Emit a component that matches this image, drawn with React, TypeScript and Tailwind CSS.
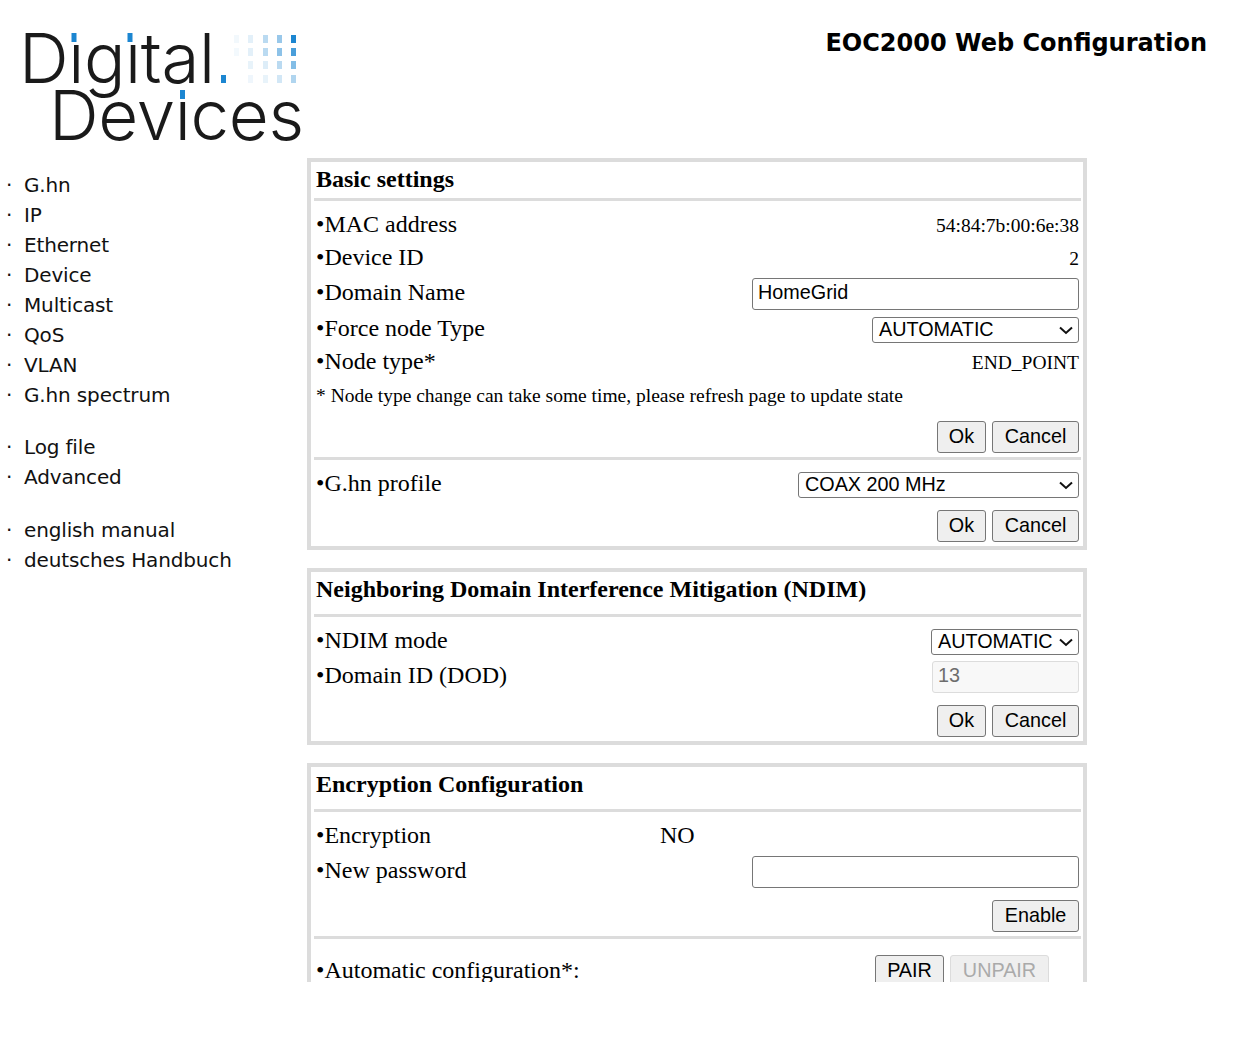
const menu = [
  ["G.hn", "IP", "Ethernet", "Device", "Multicast", "QoS", "VLAN", "G.hn spectrum"],
  ["Log file", "Advanced"],
  ["english manual", "deutsches Handbuch"],
];

function Logo() {
  const cols = [
    { x: 234, o: [0.06, 0.05, 0, 0] },
    { x: 248, o: [0.12, 0.12, 0.1, 0.07] },
    { x: 263, o: [0.3, 0.3, 0.15, 0.1] },
    { x: 277, o: [0.45, 0.5, 0.3, 0.2] },
    { x: 291, o: [1, 0.8, 0.55, 0.35] },
  ];
  const rows = [35, 48, 61, 75];
  return (
    <svg width="307" height="158" viewBox="0 0 307 158" className="blur-[0.4px]">
      <text x="19" y="83" fontFamily="Inter" fontWeight="350" fontSize="69" fill="#1a1a1a" textLength="196" lengthAdjust="spacing">
        Digital
      </text>
      <text x="49" y="140" fontFamily="Inter" fontWeight="350" fontSize="69" fill="#1a1a1a" textLength="255" lengthAdjust="spacing">
        Devices
      </text>
      <rect x="70" y="30" width="11" height="14" fill="#fff" />
      <rect x="126" y="30" width="11" height="14" fill="#fff" />
      <rect x="177" y="86" width="11" height="14" fill="#fff" />
      <rect x="71.500" y="33" width="5" height="9" fill="#1c86d1" />
      <rect x="127.500" y="33" width="5" height="9" fill="#1c86d1" />
      <rect x="180" y="90" width="5" height="9" fill="#1c86d1" />
      <rect x="221" y="75" width="5" height="8" fill="#1c86d1" />
      {cols.map((c) =>
        rows.map((y, i) => (
          <rect key={c.x + "-" + y} x={c.x} y={y} width="5" height="8" fill="#1c86d1" opacity={c.o[i]} />
        )),
      )}
    </svg>
  );
}

function Sidebar() {
  return (
    <nav className="w-[307px] shrink-0 pt-3 font-['DejaVu_Sans',sans-serif] text-[20px] tracking-[-0.15px] text-[#111] flex flex-col">
      {menu.map((group, i) => (
        <ul key={group[0]} className={i === 1 ? "mt-[22px]" : i === 2 ? "mt-[23px]" : ""}>
          {group.map((item) => (
            <li key={item} className="h-[30px] flex items-center pl-[6px]">
              <span className="w-[18px]">·</span>
              <span>{item}</span>
            </li>
          ))}
        </ul>
      ))}
    </nav>
  );
}

const btnWidth: Record<string, string> = {
  Ok: "w-[49px]",
  Cancel: "w-[87px]",
  Enable: "w-[87px]",
  PAIR: "w-[69px]",
  UNPAIR: "w-[99px]",
};

function Buttons({ labels, disabled }: { labels: string[]; disabled?: string }) {
  return (
    <div className="flex justify-end gap-[6px]">
      {labels.map((l) => (
        <button
          key={l}
          disabled={l === disabled}
          className={
            btnWidth[l] +
            " h-[32px] pb-[4px] rounded-[3px] bg-[#efefef] text-[19.8px] font-['Liberation_Sans',sans-serif] border " +
            (l === disabled ? "border-[#dcdcdc] text-[#aaa]" : "border-[#767676] text-black")
          }
        >
          {l}
        </button>
      ))}
    </div>
  );
}

function Row({ label, h, children }: { label: string; h: string; children?: React.ReactNode }) {
  return (
    <div className={"flex items-center justify-between " + h}>
      <span className="text-[24px] whitespace-nowrap pb-[4px]">•{label}</span>
      {children}
    </div>
  );
}

function Select({ value, w }: { value: string; w: string }) {
  return (
    <div className={"relative h-[26px] border border-[#767676] rounded-[3px] bg-white pl-[6px] flex items-center font-['Liberation_Sans',sans-serif] text-[19.8px] " + w}>
      <span className="whitespace-nowrap">{value}</span>
      <svg className="absolute right-[4px] top-[7px]" width="16" height="10" viewBox="0 0 16 10" fill="none">
        <path d="M2 2.500 L8 8 L14 2.500" stroke="#111" strokeWidth="2" />
      </svg>
    </div>
  );
}

function TextInput({ value, disabled }: { value?: string; disabled?: boolean }) {
  return (
    <input
      readOnly
      disabled={disabled}
      value={value ?? ""}
      className={
        disabled
          ? "w-[147px] h-[32px] px-[5px] pb-[3px] border border-[#dcdcdc] rounded-[3px] bg-[#f8f8f8] text-[#6d6d6d] text-[19.8px] font-['Liberation_Sans',sans-serif]"
          : "w-[327px] h-[32px] px-[5px] pb-[3px] border border-[#767676] rounded-[3px] bg-white text-black text-[19.8px] font-['Liberation_Sans',sans-serif]"
      }
    />
  );
}

function Divider() {
  return <div className="h-[3px] bg-[#dcdcdc] -mx-[2px]" />;
}

export default function App() {
  return (
    <div className="w-[1251px] h-[1052px] bg-white text-black font-['Liberation_Serif',serif] overflow-hidden">
      <header className="h-[158px] flex">
        <Logo />
        <h1 className="flex-1 pt-[27px] pr-[44px] text-right font-['DejaVu_Sans',sans-serif] font-bold text-[24px] leading-[32px]">
          EOC2000 Web Configuration
        </h1>
      </header>
      <div className="flex">
        <Sidebar />
        <main className="w-[780px] flex flex-col gap-[18px] h-[824px]">
          <section className="border-4 border-[#dcdcdc] pl-[5px] pr-[4px]">
            <h2 className="h-[36px] font-bold text-[24px] leading-[34px]">Basic settings</h2>
            <Divider />
            <Row label="MAC address" h="h-[33px] mt-[8px]">
              <span className="text-[19.5px]">54:84:7b:00:6e:38</span>
            </Row>
            <Row label="Device ID" h="h-[34px]">
              <span className="text-[19.5px]">2</span>
            </Row>
            <Row label="Domain Name" h="h-[36px]">
              <TextInput value="HomeGrid" />
            </Row>
            <Row label="Force node Type" h="h-[36px]">
              <Select value="AUTOMATIC" w="w-[207px]" />
            </Row>
            <Row label="Node type*" h="h-[29px]">
              <span className="text-[19.5px]">END_POINT</span>
            </Row>
            <p className="text-[19.5px] h-[36px] leading-[36px] mt-[1px]">* Node type change can take some time, please refresh page to update state</p>
            <div className="mt-[7px]">
              <Buttons labels={["Ok", "Cancel"]} />
            </div>
            <div className="mt-[4px]">
              <Divider />
            </div>
            <Row label="G.hn profile" h="h-[26px] mt-[12px]">
              <Select value="COAX 200 MHz" w="w-[281px]" />
            </Row>
            <div className="mt-[12px] pb-[4px]">
              <Buttons labels={["Ok", "Cancel"]} />
            </div>
          </section>

          <section className="border-4 border-[#dcdcdc] pl-[5px] pr-[4px]">
            <h2 className="h-[42px] font-bold text-[24px] leading-[34px]">Neighboring Domain Interference Mitigation (NDIM)</h2>
            <Divider />
            <Row label="NDIM mode" h="h-[26px] mt-[12px]">
              <Select value="AUTOMATIC" w="w-[148px]" />
            </Row>
            <Row label="Domain ID (DOD)" h="h-[32px] mt-[6px]">
              <TextInput value="13" disabled />
            </Row>
            <div className="mt-[12px] pb-[4px]">
              <Buttons labels={["Ok", "Cancel"]} />
            </div>
          </section>

          <section className="border-x-4 border-t-4 border-[#dcdcdc] pl-[5px] pr-[4px] flex-1 overflow-hidden">
            <h2 className="h-[42px] font-bold text-[24px] leading-[34px]">Encryption Configuration</h2>
            <Divider />
            <div className="flex items-center h-[32px] mt-[7px] text-[24px]">
              <span className="w-[344px] pb-[1px]">•Encryption</span>
              <span>NO</span>
            </div>
            <Row label="New password" h="h-[32px] mt-[5px]">
              <TextInput />
            </Row>
            <div className="mt-[12px]">
              <Buttons labels={["Enable"]} />
            </div>
            <div className="mt-[4px]">
              <Divider />
            </div>
            <div className="flex items-center h-[32px] mt-[16px] text-[24px]">
              <span className="w-[559px] whitespace-nowrap pb-[2px]">•Automatic configuration*:</span>
              <Buttons labels={["PAIR", "UNPAIR"]} disabled="UNPAIR" />
            </div>
          </section>
        </main>
      </div>
    </div>
  );
}
